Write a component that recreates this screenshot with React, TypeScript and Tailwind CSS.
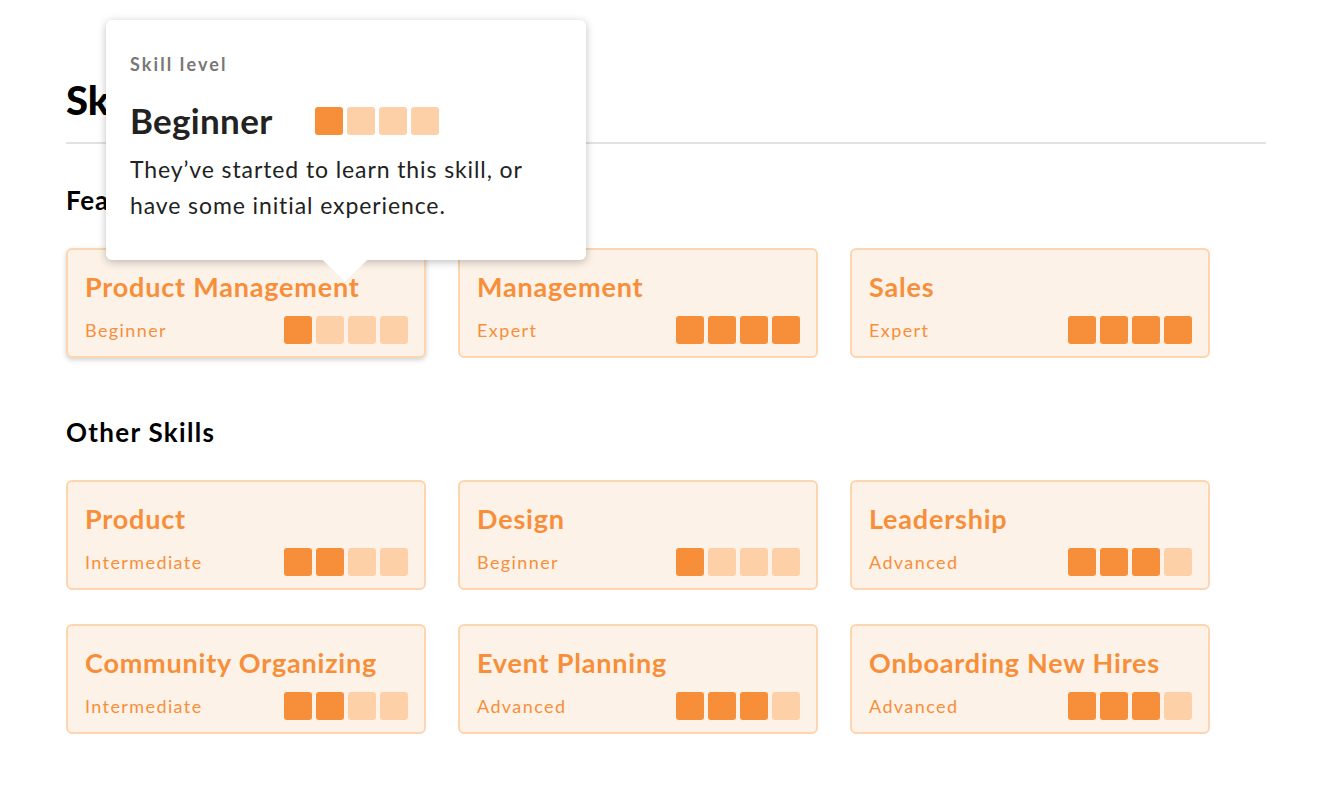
import React from 'react'

type Skill = { name: string; level: string; score: number }

const featured: Skill[] = [
  { name: 'Product Management', level: 'Beginner', score: 1 },
  { name: 'Management', level: 'Expert', score: 4 },
  { name: 'Sales', level: 'Expert', score: 4 },
]

const other: Skill[] = [
  { name: 'Product', level: 'Intermediate', score: 2 },
  { name: 'Design', level: 'Beginner', score: 1 },
  { name: 'Leadership', level: 'Advanced', score: 3 },
  { name: 'Community Organizing', level: 'Intermediate', score: 2 },
  { name: 'Event Planning', level: 'Advanced', score: 3 },
  { name: 'Onboarding New Hires', level: 'Advanced', score: 3 },
]

function Meter({ score }: { score: number }) {
  return (
    <div className="flex gap-1">
      {[0, 1, 2, 3].map(i => (
        <span
          key={i}
          className={`w-[28px] h-[28px] rounded-[3px] ${i < score ? 'bg-[#f78f3a]' : 'bg-[#fdd0a8]'}`}
        />
      ))}
    </div>
  )
}

function Tooltip() {
  return (
    <div className="absolute left-[40px] bottom-[98px] w-[480px] h-[240px] bg-white rounded-md shadow-[0_2px_8px_rgba(0,0,0,0.25)] px-6 pt-[35px] z-10">
      <p className="text-[18px] font-bold text-[#777] leading-none tracking-[2.1px]">Skill level</p>
      <div className="flex items-center gap-[42px] mt-[30px]">
        <span className="text-[35px] font-bold text-[#222] leading-none tracking-[0.3px]">Beginner</span>
        <Meter score={1} />
      </div>
      <p className="text-[23px] text-[#222] leading-[36px] mt-[13px] tracking-[0.9px]">
        They’ve started to learn this skill, or have some initial experience.
      </p>
      {/* arrow */}
      <div className="absolute left-[223px] top-full w-[32px] h-[32px] -mt-[16px] bg-white rotate-45 shadow-[3px_3px_4px_rgba(0,0,0,0.2)] [clip-path:polygon(100%_0,100%_100%,0_100%,100%_0)]" />
    </div>
  )
}

function Card({ skill, active }: { skill: Skill; active?: boolean }) {
  return (
    <div className="relative">
      <div
        className={`h-[110px] bg-[#fdf2e8] border-2 border-[#fdd5b0] rounded-md pl-[17px] pr-[16px] pt-[20px] ${active ? 'shadow-[0_2px_5px_rgba(0,0,0,0.18)]' : ''}`}
      >
        <p className="text-[27px] font-bold text-[#f78f3a] leading-[34px] tracking-[0.8px]">{skill.name}</p>
        <div className="flex items-center justify-between mt-[12px]">
          <span className="text-[18px] text-[#f78f3a] tracking-[1.4px]">{skill.level}</span>
          <Meter score={skill.score} />
        </div>
      </div>
      {active && <Tooltip />}
    </div>
  )
}

export default function App() {
  return (
    <main className="min-h-screen bg-white font-['Lato',sans-serif] px-[66px] pt-[76px]">
      <h1 className="text-[40px] font-black text-black leading-[48px]">Skills</h1>
      <div className="w-[1200px] h-[2px] bg-[#e2e2e2] mt-[18px]" />
      <h2 className="text-[26px] font-bold text-black mt-[40px] leading-[32px] tracking-[0.8px]">Featured Skills</h2>
      <div className="grid grid-cols-[360px_360px_360px] gap-x-[32px] gap-y-[34px] mt-[32px]">
        {featured.map((s, i) => (
          <Card key={s.name} skill={s} active={i === 0} />
        ))}
      </div>
      <h2 className="text-[26px] font-bold text-black mt-[58px] leading-[32px] tracking-[1.3px]">Other Skills</h2>
      <div className="grid grid-cols-[360px_360px_360px] gap-x-[32px] gap-y-[34px] mt-[32px]">
        {other.map(s => (
          <Card key={s.name} skill={s} />
        ))}
      </div>
    </main>
  )
}
